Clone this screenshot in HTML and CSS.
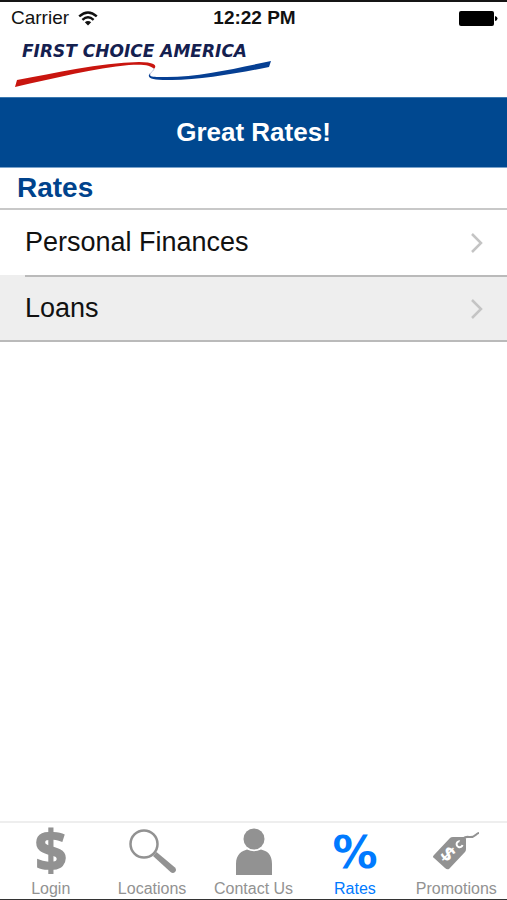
FILE: index.html
```html
<!DOCTYPE html>
<html lang="en">
  <head>
    <meta charset="UTF-8" />
    <meta name="viewport" content="width=device-width, initial-scale=1.0" />
    <title>First Choice America - Rates</title>
    <link rel="stylesheet" href="styles.css">
  </head>
  <body>
    <div class="status">
      <div class="carrier">
        <span>Carrier</span>
        <svg class="wifi" viewBox="0 0 20 15" width="20" height="15">
          <path d="M1.2 5.4 Q10 -2.6 18.8 5.4" />
          <path d="M4.4 8.8 Q10 3.6 15.6 8.8" />
          <path class="dot" d="M6.8 11.2 Q10 8.6 13.2 11.2 L10 14.6 Z" />
        </svg>
      </div>
      <div class="time">12:22 PM</div>
      <div class="power">
        <svg class="battery" viewBox="0 0 39 15" width="39" height="15">
          <rect x="0" y="0" width="35" height="15" rx="2" />
          <path d="M36 5 Q38.500 5.500 38.500 7.500 Q38.500 9.500 36 10 Z" />
        </svg>
      </div>
    </div>
    <header class="brand">
      <div class="logo">
        <span class="logoText">FIRST CHOICE AMERICA</span>
        <svg class="swoosh" viewBox="0 0 258 28" width="258" height="28">
          <path class="red" d="M0 26 L2 19 C40 12 84 2 124 1 C138 1 143 4 139 8 C136 4 128 3 114 4 C80 7 40 17 0 26 Z" />
          <path class="thread" d="M139 7 C139 11 135 10 135 15" />
          <path class="blue" d="M135 12 C133 17 141 16 152 16 C184 16 222 7 256 0 L254 6 C224 12 180 20 152 19 C137 19 131 17 135 12 Z" />
        </svg>
      </div>
    </header>
    <h1 class="banner">Great Rates!</h1>
    <main>
      <h2 class="title">Rates</h2>
      <ul class="list">
        <li>
          <a class="row" href="#personal">
            <span>Personal Finances</span>
            <svg class="arrow" viewBox="0 0 12 20" width="12" height="20"><path d="M1 1 L10 10 L1 19" /></svg>
          </a>
        </li>
        <li class="active">
          <a class="row" href="#loans">
            <span>Loans</span>
            <svg class="arrow" viewBox="0 0 12 20" width="12" height="20"><path d="M1 1 L10 10 L1 19" /></svg>
          </a>
        </li>
      </ul>
    </main>
    <nav class="tabs">
      <a class="tab" href="#login">
        <svg class="icon" viewBox="0 0 50 50" width="50" height="50" aria-hidden="true">
          <text class="dollar" x="25" y="44">$</text>
        </svg>
        <span>Login</span>
      </a>
      <a class="tab" href="#locations">
        <svg class="icon" viewBox="0 0 50 50" width="50" height="50">
          <circle class="lens" cx="17" cy="17" r="13.500" />
          <path d="M26 29 L29.500 25 L48 40.500 Q50 43 48 45 Q46 47 43.500 45 Z" />
        </svg>
        <span>Locations</span>
      </a>
      <a class="tab" href="#contact">
        <svg class="icon" viewBox="0 0 50 50" width="50" height="50">
          <circle cx="25" cy="12" r="10.500" />
          <path d="M7 48 V37 C7 27 13 24 18 22.500 Q25 26 32 22.500 C38 24 43 27 43 37 V48 Z" />
        </svg>
        <span>Contact Us</span>
      </a>
      <a class="tab current" href="#rates">
        <svg class="icon" viewBox="0 0 50 50" width="50" height="50" aria-hidden="true">
          <text class="percent" x="25" y="41">%</text>
        </svg>
        <span>Rates</span>
      </a>
      <a class="tab" href="#promotions">
        <svg class="icon" viewBox="0 0 50 50" width="50" height="50">
          <path d="M3 28 L19 11 Q20 10 22 10 L33 10 Q35 10 35 12 L35 22 Q35 24 34 25 L18 42 Q16 43 14 41 L3 31 Q1 30 3 28 Z" />
          <path class="hole" d="M30 14.500 A3 3 0 1 0 31.500 18" />
          <path class="string" d="M29 16 Q32 9 38 10 C44 11 45 6 48 6" />
          <text class="price" x="17" y="34" transform="rotate(42 17 27)">$</text>
        </svg>
        <span>Promotions</span>
      </a>
    </nav>
  </body>
</html>
```

FILE: styles.css
```css
* {
  box-sizing: border-box;
}
body {
  margin: 0;
  min-height: 100vh;
  display: flex;
  flex-direction: column;
  background-color: white;
  color: #111;
  font-family: "Liberation Sans", Arial, sans-serif;
  border-top: 2px solid #151515;
  border-bottom: 1px solid #333;
}
a {
  color: inherit;
  text-decoration: none;
}
.status {
  display: grid;
  grid-template-columns: 1fr auto 1fr;
  align-items: center;
  height: 32px;
  padding: 0 9px 0 11px;
  font-size: 19px;
}
.carrier {
  display: flex;
  align-items: center;
  gap: 9px;
}
.wifi {
  fill: none;
  stroke: #111;
  stroke-width: 2.4;
}
.wifi .dot {
  fill: #111;
  stroke: none;
}
.time {
  font-weight: bold;
}
.power {
  display: flex;
  justify-content: flex-end;
}
.brand {
  height: 63px;
  padding: 7px 15px;
}
.logo {
  display: flex;
  flex-direction: column;
}
.logoText {
  padding-left: 7px;
  font-family: "DejaVu Sans", sans-serif;
  font-size: 17px;
  line-height: 20px;
  font-weight: bold;
  font-style: italic;
  color: #14204f;
  white-space: nowrap;
}
.red {
  fill: #c9150f;
}
.blue {
  fill: #063f93;
}
.thread {
  fill: none;
  stroke: #b9bfd8;
}
.banner {
  margin: 0;
  background-color: #004890;
  border-top: 1px solid #3a78b0;
  border-bottom: 1px solid #7ba3cb;
  color: white;
  font-size: 26px;
  line-height: 69px;
  text-align: center;
}
.title {
  margin: 0;
  padding-left: 17px;
  color: #00438c;
  font-size: 28px;
  line-height: 40px;
}
.list {
  margin: 0;
  padding: 0;
  list-style: none;
  border-top: 2px solid #c8c8c8;
  border-bottom: 2px solid #bababa;
}
.row {
  display: flex;
  align-items: center;
  justify-content: space-between;
  height: 65px;
  margin-left: 25px;
  padding-right: 24px;
  font-size: 27px;
}
li + li .row {
  border-top: 2px solid #bababa;
}
.active {
  background-color: #eee;
}
.arrow {
  fill: none;
  stroke: #c4c4c4;
  stroke-width: 2.5;
}
.tabs {
  display: flex;
  margin-top: auto;
  height: 78px;
  border-top: 2px solid #eee;
}
.tab {
  flex: 1;
  display: flex;
  flex-direction: column;
  align-items: center;
  padding-top: 4px;
  color: #929292;
  font-size: 16px;
  line-height: 24px;
  white-space: nowrap;
}
.current {
  color: #007aff;
}
.icon {
  flex-shrink: 0;
  fill: currentColor;
  overflow: visible;
}
.lens {
  fill: none;
  stroke: currentColor;
  stroke-width: 2.5;
}
.dollar,
.percent,
.price {
  font-family: "Open Sans", sans-serif;
  font-weight: bold;
  text-anchor: middle;
}
.dollar {
  font-size: 56px;
  font-weight: 800;
}
.percent {
  font-family: "DejaVu Sans", sans-serif;
  font-size: 45px;
}
.price {
  font-size: 20px;
  fill: white;
}
.hole {
  fill: none;
  stroke: white;
  stroke-width: 2;
}
.string {
  fill: none;
  stroke: #929292;
  stroke-width: 2;
}
```
